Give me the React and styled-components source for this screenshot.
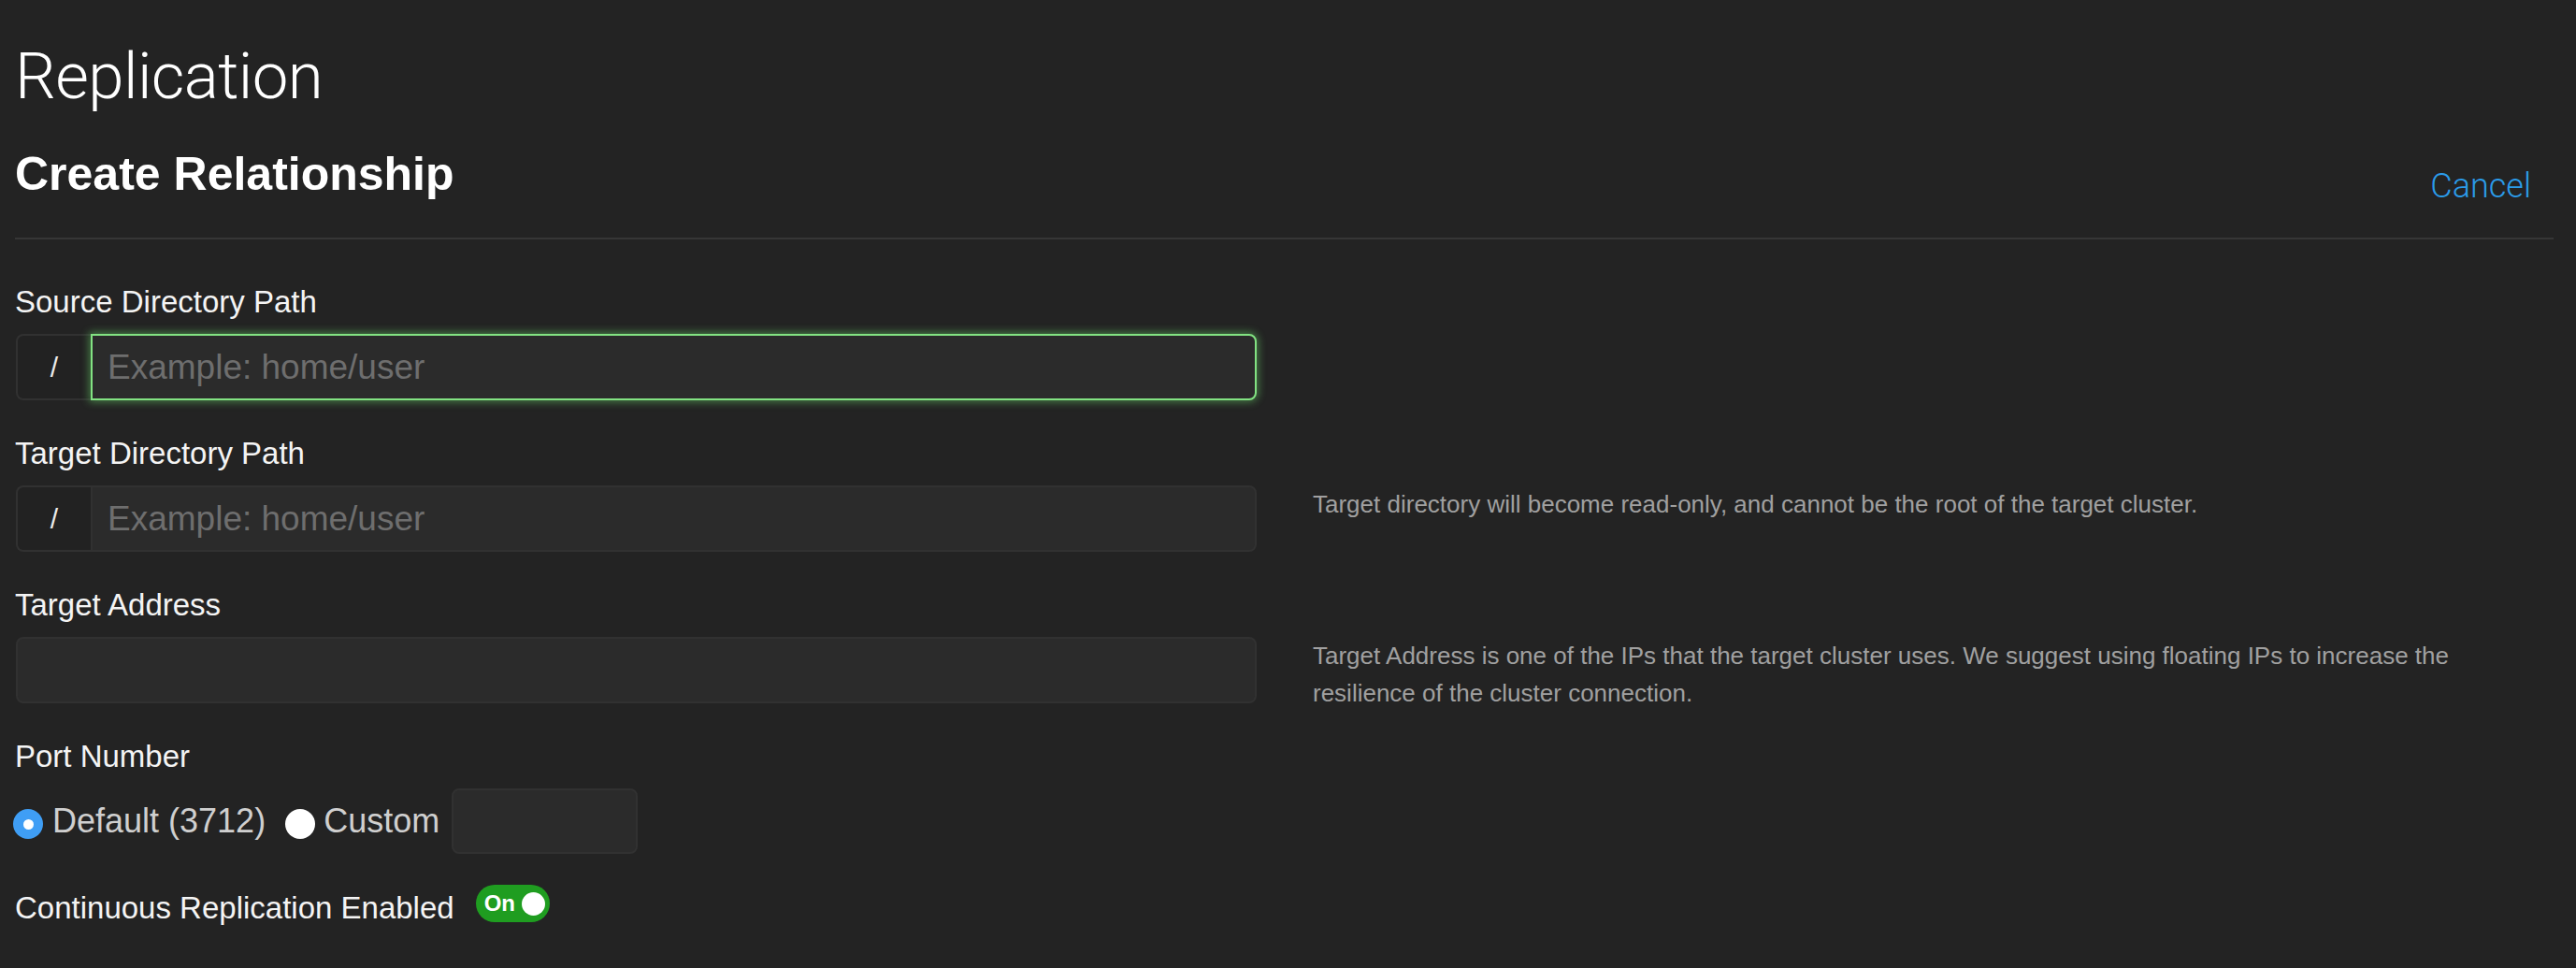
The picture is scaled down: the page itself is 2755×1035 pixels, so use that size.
import React from 'react';
import styled, { createGlobalStyle } from 'styled-components';

const GlobalStyle = createGlobalStyle`
  html, body { margin: 0; padding: 0; background: #232323; }
  body { font-family: "Liberation Sans", Arial, sans-serif; color: #f4f4f4; }
  * { box-sizing: border-box; }
`;

const Page = styled.div`
  min-height: 1035px;
  padding: 42px 24px 40px 16px;
  background: #232323;
`;

const Title = styled.h1`
  margin: 0;
  font-family: Roboto, "Liberation Sans", sans-serif;
  font-weight: 300;
  font-size: 69px;
  line-height: 80px;
  letter-spacing: -0.6px;
  color: #ffffff;
`;

const Header = styled.div`
  display: flex;
  justify-content: space-between;
  align-items: flex-end;
  margin-top: 34px;
  padding-bottom: 38px;
  border-bottom: 2px solid #363636;
`;

const Subtitle = styled.h2`
  margin: 0;
  font-family: "Liberation Sans", Arial, sans-serif;
  font-weight: 700;
  font-size: 50px;
  line-height: 60px;
  color: #ffffff;
`;

const CancelLink = styled.a`
  margin-right: 24px;
  font-family: Roboto, "Liberation Sans", sans-serif;
  font-weight: 300;
  font-size: 36px;
  line-height: 34px;
  color: #2b9be9;
  text-decoration: none;
  cursor: pointer;
`;

const Form = styled.form`
  display: flex;
  flex-direction: column;
  margin-top: 47px;
`;

const Field = styled.div`
  display: flex;
  flex-direction: column;
  & + & {
    margin-top: 37px;
  }
`;

const Label = styled.label`
  font-size: 33px;
  line-height: 40px;
  color: #f4f4f4;
  margin-bottom: 14px;
`;

const FieldRow = styled.div`
  display: grid;
  grid-template-columns: 1328px 1fr;
  grid-auto-rows: 71px;
  column-gap: 60px;
  align-items: start;
`;

const InputGroup = styled.div`
  display: flex;
  height: 71px;
  margin-left: 1px;
`;

const Prefix = styled.span`
  display: flex;
  align-items: center;
  justify-content: center;
  width: 80px;
  flex: none;
  background: #222222;
  border: 2px solid #313131;
  border-right: none;
  border-radius: 8px 0 0 8px;
  font-size: 30px;
  color: #eaeaea;
`;

const TextInput = styled.input`
  flex: 1;
  min-width: 0;
  height: 71px;
  padding: 0 16px;
  background: #2b2b2b;
  border: 2px solid ${(p) => (p.$focused ? '#82e282' : '#313131')};
  border-radius: ${(p) => (p.$attached ? '0 8px 8px 0' : '8px')};
  box-shadow: ${(p) => (p.$focused ? '0 0 9px 2px rgba(110, 225, 110, 0.45)' : 'none')};
  font-family: "Liberation Sans", Arial, sans-serif;
  font-size: 37px;
  color: #eaeaea;
  outline: none;
  &::placeholder {
    color: #6e6e6e;
  }
`;

const Help = styled.p`
  margin: 0;
  font-size: 26px;
  line-height: 40px;
  color: #a0a0a0;
`;

const RadioRow = styled.div`
  display: flex;
  align-items: center;
  height: 70px;
  margin-left: -2px;
`;

const RadioOption = styled.label`
  display: flex;
  align-items: center;
  gap: ${(p) => p.$gap}px;
  margin-right: ${(p) => p.$after}px;
  font-size: 36px;
  color: #cfcfcf;
  cursor: pointer;
`;

const RadioDot = styled.span`
  width: 32px;
  height: 32px;
  flex: none;
  border-radius: 50%;
  background: ${(p) => (p.$checked ? '#3f9ef5' : '#ffffff')};
  display: flex;
  align-items: center;
  justify-content: center;
  margin-top: 6px;
  &::after {
    content: '';
    width: 11px;
    height: 11px;
    border-radius: 50%;
    background: #ffffff;
    display: ${(p) => (p.$checked ? 'block' : 'none')};
  }
`;

const PortInput = styled.input`
  width: 199px;
  height: 70px;
  background: #2b2b2b;
  border: 2px solid #313131;
  border-radius: 8px;
  outline: none;
  font-size: 33px;
  color: #eaeaea;
  padding: 0 12px;
`;

const ToggleRow = styled.div`
  display: flex;
  align-items: flex-start;
  gap: 23px;
  margin-top: 33px;
`;

const ToggleLabel = styled.span`
  font-size: 33px;
  line-height: 40px;
  padding-top: 5px;
  color: #f4f4f4;
`;

const Toggle = styled.span`
  display: flex;
  align-items: center;
  justify-content: space-between;
  width: 79px;
  height: 40px;
  padding: 0 5px 0 9px;
  border-radius: 20px;
  background: #1f9d20;
  font-weight: 700;
  font-size: 24px;
  color: #ffffff;
  &::after {
    content: '';
    width: 25px;
    height: 25px;
    border-radius: 50%;
    background: #ffffff;
  }
`;

export default function App() {
  return (
    <Page>
      <GlobalStyle />
      <Title>Replication</Title>
      <Header>
        <Subtitle>Create Relationship</Subtitle>
        <CancelLink>Cancel</CancelLink>
      </Header>
      <Form onSubmit={(e) => e.preventDefault()}>
        <Field>
          <Label>Source Directory Path</Label>
          <FieldRow>
            <InputGroup>
              <Prefix>/</Prefix>
              <TextInput $attached $focused placeholder="Example: home/user" />
            </InputGroup>
          </FieldRow>
        </Field>
        <Field>
          <Label>Target Directory Path</Label>
          <FieldRow>
            <InputGroup>
              <Prefix>/</Prefix>
              <TextInput $attached placeholder="Example: home/user" />
            </InputGroup>
            <Help>Target directory will become read-only, and cannot be the root of the target cluster.</Help>
          </FieldRow>
        </Field>
        <Field>
          <Label>Target Address</Label>
          <FieldRow>
            <InputGroup>
              <TextInput />
            </InputGroup>
            <Help>
              Target Address is one of the IPs that the target cluster uses. We suggest using floating IPs to
              increase the resilience of the cluster connection.
            </Help>
          </FieldRow>
        </Field>
        <Field>
          <Label>Port Number</Label>
          <RadioRow>
            <RadioOption $gap={10} $after={21}>
              <RadioDot $checked />
              Default (3712)
            </RadioOption>
            <RadioOption $gap={9} $after={13}>
              <RadioDot />
              Custom
            </RadioOption>
            <PortInput />
          </RadioRow>
        </Field>
        <ToggleRow>
          <ToggleLabel>Continuous Replication Enabled</ToggleLabel>
          <Toggle>On</Toggle>
        </ToggleRow>
      </Form>
    </Page>
  );
}
